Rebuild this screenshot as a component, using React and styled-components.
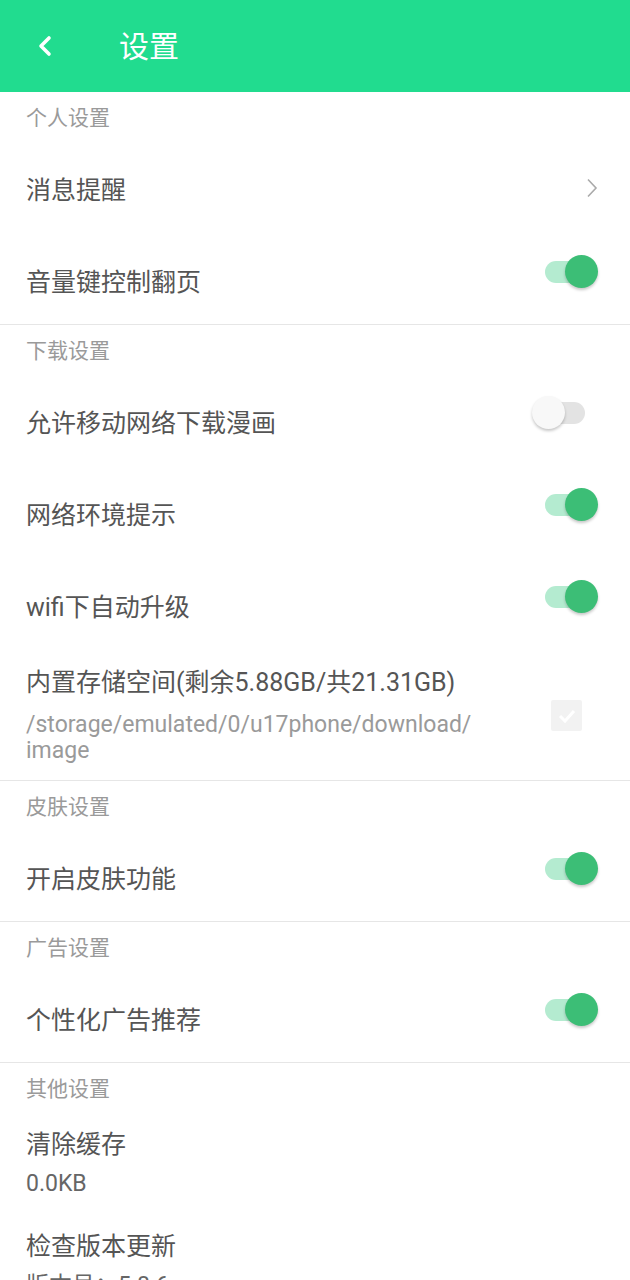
import React from 'react'
import styled, { createGlobalStyle } from 'styled-components'

const GlobalStyle = createGlobalStyle`
  html, body {
    margin: 0;
    padding: 0;
    background: #fff;
  }
  body {
    font-family: Roboto, "Noto Sans CJK SC", sans-serif;
  }
`

const Page = styled.div`
  width: 630px;
  height: 1280px;
  overflow: hidden;
  background: #fff;
`

// 顶部绿色标题栏
const Header = styled.header`
  height: 92px;
  background: #21dc8f;
  display: flex;
  align-items: center;
`

const BackButton = styled.button`
  width: 119px;
  height: 92px;
  border: 0;
  background: none;
  padding: 0 0 0 38px;
  display: flex;
  align-items: center;
  cursor: pointer;
`

const Title = styled.h1`
  margin: 0 0 4px;
  font-size: 30px;
  font-weight: 400;
  color: #fff;
`

const Section = styled.section`
  border-bottom: ${props => (props.$last ? 'none' : '1px solid #e6e6e6')};
`

const SectionTitle = styled.div`
  height: 48px;
  display: flex;
  align-items: center;
  padding-left: 26px;
  font-size: 21px;
  color: #9a9a9a;
`

const Row = styled.div`
  height: 92px;
  display: flex;
  align-items: center;
  justify-content: space-between;
  padding: 0 32px 0 26px;
  box-sizing: border-box;
`

const TwoLineRow = styled.div`
  display: flex;
  align-items: center;
  justify-content: space-between;
  padding: 18px 32px 16px 26px;
`

const TextBlock = styled.div`
  display: flex;
  flex-direction: column;
`

const Label = styled.span`
  font-size: 25px;
  line-height: 32px;
  color: #555;
  margin-top: ${props => (props.$single ? '10px' : '0')};
`

const SubText = styled.span`
  margin-top: ${props => props.$gap || 10}px;
  font-size: 23px;
  line-height: 26px;
  color: ${props => (props.$dark ? '#666' : '#9a9a9a')};
`

// 开关：轨道用 ::before，圆形滑块用 ::after；整体比文字略高
const Switch = styled.span`
  position: relative;
  flex: none;
  width: 66px;
  height: 34px;
  margin-bottom: 12px;

  &::before {
    content: '';
    position: absolute;
    left: 13px;
    top: 6px;
    width: 40px;
    height: 22px;
    border-radius: 11px;
    background: ${props => (props.$on ? '#b4ebd0' : '#e3e3e3')};
  }

  &::after {
    content: '';
    position: absolute;
    top: 0;
    left: ${props => (props.$on ? '33px' : '0')};
    width: 33px;
    height: 33px;
    border-radius: 50%;
    background: ${props => (props.$on ? '#3cbe76' : '#f8f8f8')};
    box-shadow: 0 2px 3px rgba(0, 0, 0, 0.22);
  }
`

const Arrow = styled.span`
  display: flex;
  margin-top: 4px;
`

const CheckBox = styled.span`
  flex: none;
  width: 31px;
  height: 31px;
  margin-right: 16px;
  border-radius: 2px;
  background: #f2f2f2;
  display: flex;
  align-items: center;
  justify-content: center;
`

const ChevronLeft = () => (
  <svg width="16" height="22" viewBox="0 0 16 22">
    <polyline points="11,3 3,11 11,19" fill="none" stroke="#fff" strokeWidth="3.6" strokeLinecap="round" strokeLinejoin="round" />
  </svg>
)

const ChevronRight = () => (
  <svg width="12" height="20" viewBox="0 0 12 20">
    <polyline points="2,1.5 10,10 2,18.5" fill="none" stroke="#aaa" strokeWidth="1.6" />
  </svg>
)

const CheckMark = () => (
  <svg width="22" height="22" viewBox="0 0 22 22">
    <polyline points="4,11 9,16 18,6" fill="none" stroke="#fff" strokeWidth="3" />
  </svg>
)

export default function App() {
  return (
    <Page>
      <GlobalStyle />
      <Header>
        <BackButton>
          <ChevronLeft />
        </BackButton>
        <Title>设置</Title>
      </Header>

      <Section>
        <SectionTitle>个人设置</SectionTitle>
        <Row>
          <Label $single>消息提醒</Label>
          <Arrow>
            <ChevronRight />
          </Arrow>
        </Row>
        <Row>
          <Label $single>音量键控制翻页</Label>
          <Switch $on />
        </Row>
      </Section>

      <Section>
        <SectionTitle>下载设置</SectionTitle>
        <Row>
          <Label $single>允许移动网络下载漫画</Label>
          <Switch />
        </Row>
        <Row>
          <Label $single>网络环境提示</Label>
          <Switch $on />
        </Row>
        <Row>
          <Label $single>wifi下自动升级</Label>
          <Switch $on />
        </Row>
        <TwoLineRow>
          <TextBlock>
            <Label>内置存储空间(剩余5.88GB/共21.31GB)</Label>
            <SubText $gap={13}>
              /storage/emulated/0/u17phone/download/
              <br />
              image
            </SubText>
          </TextBlock>
          <CheckBox>
            <CheckMark />
          </CheckBox>
        </TwoLineRow>
      </Section>

      <Section>
        <SectionTitle>皮肤设置</SectionTitle>
        <Row>
          <Label $single>开启皮肤功能</Label>
          <Switch $on />
        </Row>
      </Section>

      <Section>
        <SectionTitle>广告设置</SectionTitle>
        <Row>
          <Label $single>个性化广告推荐</Label>
          <Switch $on />
        </Row>
      </Section>

      <Section $last>
        <SectionTitle>其他设置</SectionTitle>
        <TwoLineRow>
          <TextBlock>
            <Label>清除缓存</Label>
            <SubText $dark>0.0KB</SubText>
          </TextBlock>
        </TwoLineRow>
        <TwoLineRow>
          <TextBlock>
            <Label>检查版本更新</Label>
            <SubText $dark>版本号：5.8.6</SubText>
          </TextBlock>
        </TwoLineRow>
      </Section>
    </Page>
  )
}
